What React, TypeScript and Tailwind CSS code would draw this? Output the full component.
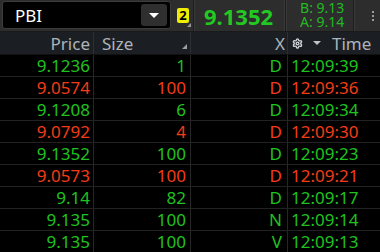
import { Settings } from "lucide-react";

type Trade = { price: string; size: string; x: string; time: string; up: boolean };

const trades: Trade[] = [
  { price: "9.1236", size: "1", x: "D", time: "12:09:39", up: true },
  { price: "9.0574", size: "100", x: "D", time: "12:09:36", up: false },
  { price: "9.1208", size: "6", x: "D", time: "12:09:34", up: true },
  { price: "9.0792", size: "4", x: "D", time: "12:09:30", up: false },
  { price: "9.1352", size: "100", x: "D", time: "12:09:23", up: true },
  { price: "9.0573", size: "100", x: "D", time: "12:09:21", up: false },
  { price: "9.14", size: "82", x: "D", time: "12:09:17", up: true },
  { price: "9.135", size: "100", x: "N", time: "12:09:14", up: true },
  { price: "9.135", size: "100", x: "V", time: "12:09:13", up: true },
];

const font = { fontFamily: "'Noto Sans', 'Open Sans', sans-serif" };

export default function App() {
  return (
    <div className="w-[380px] h-[252px] overflow-hidden bg-black text-[17px] leading-none" style={font}>
      {/* Top bar */}
      <div className="h-[32px] flex items-start bg-[#2d2d2d] border-b border-[#1a1a1a]">
        <div className="ml-[2px] mt-[1px] w-[169px] h-[28px] bg-black border border-[#3c3c3c] rounded-[3px] flex items-center justify-between pl-[12px] pr-[3px]">
          <span className="text-white text-[17px]">PBI</span>
          <div className="w-[26px] h-[22px] bg-[#2f2f2f] rounded-[3px] flex items-center justify-center">
            <div className="w-0 h-0 border-l-[5px] border-r-[5px] border-t-[5px] border-l-transparent border-r-transparent border-t-white" />
          </div>
        </div>
        <div className="relative ml-[6px] mt-[8px] w-[12px] h-[15px] bg-[#eeee00] rounded-[2px] flex items-center justify-center text-black font-bold text-[13px]">
          2
          <div className="absolute right-[-2px] bottom-[-4px] w-0 h-0 border-b-[4px] border-l-[4px] border-l-transparent border-b-[#9a9a9a]" />
        </div>
        <div className="ml-[4px] h-[31px] w-[2px] bg-[#1c1c1c] border-r border-[#3a3a3a]" />
        <div className="ml-[9px] h-[31px] flex items-center text-[#22c922] font-bold text-[22px]">9.1352</div>
        <div className="ml-[11px] h-[31px] w-[3px] bg-[#1c1c1c] border-x border-[#3a3a3a]" />
        <div className="ml-[13px] pt-[1px] flex flex-col text-[#22b922] text-[14px] leading-[14px]">
          <span>B: 9.13</span>
          <span>A: 9.14</span>
        </div>
        <div className="ml-[9px] h-[31px] w-[2px] bg-[#1c1c1c] border-r border-[#3a3a3a]" />
        <div className="ml-[17px] h-[31px] flex flex-col justify-center gap-[2px]">
          <div className="w-[2px] h-[2px] bg-[#9a9a9a]" />
          <div className="w-[2px] h-[2px] bg-[#9a9a9a]" />
          <div className="w-[2px] h-[2px] bg-[#9a9a9a]" />
        </div>
      </div>

      {/* Header */}
      <div className="h-[23px] flex bg-[#1b1f23] text-[#aeb4ba] border-b border-[#111]">
        <div className="w-[94px] flex items-center justify-end pr-[3px] border-r border-[#2c3034]">Price</div>
        <div className="relative w-[97px] flex items-center pl-[8px] border-r border-[#2c3034]">
          Size
          <div className="absolute right-[3px] bottom-[5px] w-0 h-0 border-b-[5px] border-l-[5px] border-l-transparent border-b-[#9aa0a6]" />
        </div>
        <div className="w-[97px] flex items-center justify-end pr-[2px] border-r border-[#2c3034]">X</div>
        <div className="flex-1 flex items-center pl-[4px]">
          <Settings size={11} strokeWidth={3} className="text-[#d0d4d8]" />
          <div className="ml-[10px] w-0 h-0 border-l-[4px] border-r-[4px] border-t-[4px] border-l-transparent border-r-transparent border-t-[#c0c4c8]" />
          <span className="ml-[11px]">Time</span>
        </div>
      </div>

      {/* Rows */}
      {trades.map((t, i) => (
        <div
          key={i}
          className={`h-[22px] flex border-b border-[#222] ${t.up ? "text-[#1fc21f]" : "text-[#f23c16]"}`}
        >
          <div className="w-[94px] flex items-center justify-end pr-[3px] border-r border-[#262626]">{t.price}</div>
          <div className="w-[97px] flex items-center justify-end pr-[4px] border-r border-[#262626]">{t.size}</div>
          <div className="w-[97px] flex items-center justify-end pr-[5px] border-r border-[#262626]">{t.x}</div>
          <div className="flex-1 flex items-center pl-[3px]">{t.time}</div>
        </div>
      ))}
    </div>
  );
}
